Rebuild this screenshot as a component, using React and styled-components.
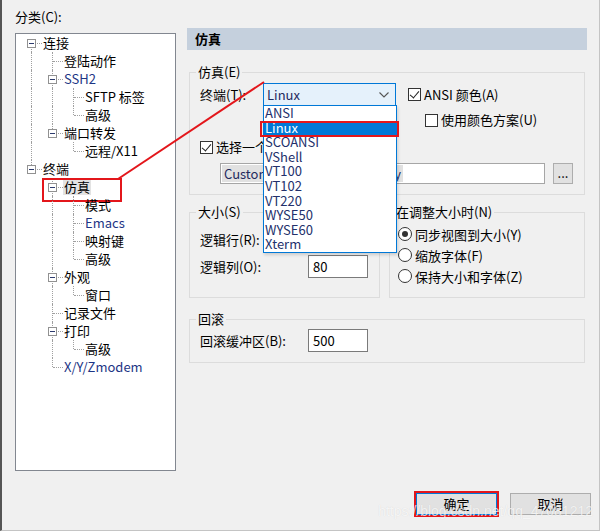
import React from "react";
import styled, { createGlobalStyle } from "styled-components";

const GlobalStyle = createGlobalStyle`
  html, body {
    margin: 0;
    padding: 0;
    background: #f0f0f0;
  }
  body {
    font-family: "Noto Sans CJK SC", "Noto Sans", sans-serif;
    font-size: 13px;
    color: #000;
  }
  * {
    box-sizing: border-box;
  }
`;

const tree = [
  {
    label: "连接",
    children: [
      { label: "登陆动作" },
      { label: "SSH2", latin: true, children: [{ label: "SFTP 标签" }, { label: "高级" }] },
      { label: "端口转发", children: [{ label: "远程/X11" }] },
    ],
  },
  {
    label: "终端",
    children: [
      {
        label: "仿真",
        selected: true,
        marked: true,
        children: [
          { label: "模式" },
          { label: "Emacs", latin: true },
          { label: "映射键" },
          { label: "高级" },
        ],
      },
      { label: "外观", children: [{ label: "窗口" }] },
      { label: "记录文件" },
      { label: "打印", children: [{ label: "高级" }] },
      { label: "X/Y/Zmodem", latin: true },
    ],
  },
];

// flatten the tree so every row knows which guide lines to draw
const flatten = (nodes, guides = [], out = []) => {
  nodes.forEach((node, i) => {
    const last = i === nodes.length - 1;
    out.push({ ...node, guides, first: guides.length === 0 && i === 0, last });
    if (node.children) flatten(node.children, [...guides, !last], out);
  });
  return out;
};

const terminals = ["ANSI", "Linux", "SCOANSI", "VShell", "VT100", "VT102", "VT220", "WYSE50", "WYSE60", "Xterm"];

const App = () => {
  const rows = flatten(tree);
  return (
    <Window>
      <GlobalStyle />
      <Body>
        <LeftCol>
          <Caption>分类(C):</Caption>
          <Tree>
            {rows.map((row, idx) => (
              <TreeRow key={idx} $marked={row.marked}>
                {row.guides.map((g, k) => (
                  <Guide key={k} $line={g} />
                ))}
                <Connector $first={row.first} $last={row.last}>
                  {row.children && <Expander />}
                </Connector>
                <NodeLabel $selected={row.selected} $latin={row.latin}>
                  {row.label}
                </NodeLabel>
              </TreeRow>
            ))}
          </Tree>
        </LeftCol>

        <Panel>
          <PanelHeader>仿真</PanelHeader>

          <Group $mt={14} $pt={3}>
            <Legend>仿真(E)</Legend>
            <FieldRow>
              <FieldLabel $w={63}>终端(T):</FieldLabel>
              <Combo>
                <ComboText>Linux</ComboText>
                <svg width="10" height="6" viewBox="0 0 10 6">
                  <polyline points="0.5,0.5 5,5 9.5,0.5" fill="none" stroke="#555" strokeWidth="1.1" />
                </svg>
                <DropList>
                  {terminals.map((t) => (
                    <DropItem key={t} $active={t === "Linux"}>
                      {t}
                    </DropItem>
                  ))}
                </DropList>
              </Combo>
              <CheckLabel $ml={12}>
                <CheckBox $checked />
                ANSI 颜色(A)
              </CheckLabel>
            </FieldRow>
            <FieldRow $mt={6} $pl={225}>
              <CheckLabel>
                <CheckBox />
                使用颜色方案(U)
              </CheckLabel>
            </FieldRow>
            <FieldRow $mt={11}>
              <CheckLabel>
                <CheckBox $checked />
                选择一个颜色方案(S)
              </CheckLabel>
            </FieldRow>
            <FieldRow $mt={8} $pl={20}>
              <SchemeField>
                <SchemeSelected>
                  <span>Custom</span>
                  <span>y</span>
                </SchemeSelected>
              </SchemeField>
              <MoreButton>...</MoreButton>
            </FieldRow>
          </Group>

          <GroupPair>
            <Group $pt={8} $grow={191}>
              <Legend>大小(S)</Legend>
              <FieldRow>
                <FieldLabel $w={108}>逻辑行(R):</FieldLabel>
                <TextInput>24</TextInput>
              </FieldRow>
              <FieldRow $mt={4}>
                <FieldLabel $w={108}>逻辑列(O):</FieldLabel>
                <TextInput>80</TextInput>
              </FieldRow>
            </Group>
            <Group $pt={4} $grow={196} $pl={8}>
              <Legend>在调整大小时(N)</Legend>
              <RadioRow>
                <Radio $checked />
                同步视图到大小(Y)
              </RadioRow>
              <RadioRow>
                <Radio />
                缩放字体(F)
              </RadioRow>
              <RadioRow>
                <Radio />
                保持大小和字体(Z)
              </RadioRow>
            </Group>
          </GroupPair>

          <Group $mt={13} $pt={2}>
            <Legend>回滚</Legend>
            <FieldRow>
              <FieldLabel $w={108}>回滚缓冲区(B):</FieldLabel>
              <TextInput>500</TextInput>
            </FieldRow>
          </Group>
        </Panel>
      </Body>

      <Footer>
        <DialogButton $default>确定</DialogButton>
        <DialogButton>取消</DialogButton>
      </Footer>

      <Annotation width="600" height="531" viewBox="0 0 600 531">
        <line x1="118" y1="179" x2="264" y2="82" stroke="#e3161b" strokeWidth="2" />
      </Annotation>
      <Watermark>https://blog.csdn.net/qq_47081212</Watermark>
    </Window>
  );
};

export default App;

const Window = styled.div`
  position: relative;
  width: 600px;
  height: 531px;
  background: #f0f0f0;
  border-left: 2px solid #555;
  border-right: 1px solid #c4c4c4;
  border-bottom: 1px solid #c4c4c4;
  padding-top: 9px;
  overflow: hidden;
`;

const Body = styled.div`
  display: flex;
  align-items: flex-start;
`;

const LeftCol = styled.div`
  margin-left: 13px;
  width: 161px;
  display: flex;
  flex-direction: column;
`;

const Caption = styled.div`
  line-height: 16px;
  height: 16px;
`;

const Tree = styled.div`
  margin-top: 8px;
  height: 438px;
  background: #fff;
  border: 1px solid #828790;
  padding: 0 0 0 5px;
`;

const TreeRow = styled.div`
  position: relative;
  display: flex;
  align-items: center;
  height: 18px;
  ${(p) =>
    p.$marked &&
    `
    &::after {
      content: "";
      position: absolute;
      left: 21px;
      top: 0;
      width: 76px;
      height: 20px;
      border: 2px solid #e3161b;
    }
  `}
`;

const Guide = styled.span`
  position: relative;
  width: 21px;
  height: 18px;
  flex: none;
  &::before {
    content: "";
    display: ${(p) => (p.$line ? "block" : "none")};
    position: absolute;
    left: 10px;
    top: 0;
    bottom: 0;
    border-left: 1px dotted #a0a0a0;
  }
`;

const Connector = styled.span`
  position: relative;
  width: 21px;
  height: 18px;
  flex: none;
  &::before {
    content: "";
    position: absolute;
    left: 10px;
    top: ${(p) => (p.$first ? "9px" : "0")};
    bottom: ${(p) => (p.$last ? "9px" : "0")};
    border-left: 1px dotted #a0a0a0;
  }
  &::after {
    content: "";
    position: absolute;
    left: 11px;
    right: 0;
    top: 9px;
    border-top: 1px dotted #a0a0a0;
  }
`;

const Expander = styled.span`
  position: absolute;
  left: 6px;
  top: 5px;
  width: 9px;
  height: 9px;
  background: #fff;
  border: 1px solid #919191;
  z-index: 1;
  &::after {
    content: "";
    position: absolute;
    left: 1px;
    right: 1px;
    top: 3px;
    height: 1px;
    background: #2d3b6e;
  }
`;

const NodeLabel = styled.span`
  padding: 0 1px;
  line-height: 16px;
  white-space: nowrap;
  color: ${(p) => (p.$latin ? "#1d3585" : "#000")};
  background: ${(p) => (p.$selected ? "#e3e3e3" : "transparent")};
`;

const Panel = styled.div`
  margin-left: 11px;
  margin-top: 19px;
  width: 400px;
  display: flex;
  flex-direction: column;
`;

const PanelHeader = styled.div`
  height: 22px;
  line-height: 22px;
  padding-left: 8px;
  background: #c5d0dd;
  font-weight: bold;
`;

const Group = styled.fieldset`
  margin: ${(p) => p.$mt || 0}px 2px 0;
  padding: ${(p) => p.$pt}px 10px 10px ${(p) => p.$pl ?? 10}px;
  border: 1px solid #dcdcdc;
  min-width: 0;
  ${(p) => p.$grow && `width: ${p.$grow}px; margin: 0;`}
`;

const Legend = styled.legend`
  padding: 0 2px;
  margin-left: -4px;
  line-height: 16px;
`;

const GroupPair = styled.div`
  display: flex;
  align-items: stretch;
  gap: 9px;
  margin: 9px 2px 0;
`;

const FieldRow = styled.div`
  display: flex;
  align-items: center;
  margin-top: ${(p) => p.$mt || 0}px;
  padding-left: ${(p) => p.$pl || 0}px;
`;

const FieldLabel = styled.span`
  width: ${(p) => p.$w}px;
  flex: none;
  line-height: 16px;
`;

const Combo = styled.div`
  position: relative;
  z-index: 3;
  width: 133px;
  height: 23px;
  background: #e5f1fb;
  border: 1px solid #0078d7;
  display: flex;
  align-items: center;
  justify-content: space-between;
  padding: 0 6px 0 3px;
`;

const ComboText = styled.span`
  color: #1f2a5e;
  line-height: 16px;
`;

const DropList = styled.div`
  position: absolute;
  left: -1px;
  top: 100%;
  width: 134px;
  background: #fff;
  border: 1px solid #0078d7;
  box-shadow: 1px 2px 3px rgba(0, 0, 0, 0.15);
`;

const DropItem = styled.div`
  position: relative;
  height: 14.6px;
  line-height: 14.6px;
  padding-left: 1px;
  color: ${(p) => (p.$active ? "#fff" : "#23306b")};
  background: ${(p) => (p.$active ? "#0078d7" : "transparent")};
  ${(p) =>
    p.$active &&
    `
    &::after {
      content: "";
      position: absolute;
      left: -4px;
      right: -3px;
      top: 0;
      bottom: -2px;
      border: 2px solid #e3161b;
    }
  `}
`;

const CheckLabel = styled.label`
  display: flex;
  align-items: center;
  height: 16px;
  line-height: 16px;
  margin-left: ${(p) => p.$ml || 0}px;
  white-space: nowrap;
`;

const CheckBox = styled.span`
  position: relative;
  flex: none;
  width: 13px;
  height: 13px;
  margin-right: 3px;
  background: #fff;
  border: 1px solid #333;
  ${(p) =>
    p.$checked &&
    `
    &::after {
      content: "";
      position: absolute;
      left: 3px;
      top: 0px;
      width: 4px;
      height: 8px;
      border-right: 1.3px solid #222;
      border-bottom: 1.3px solid #222;
      transform: rotate(40deg);
    }
  `}
`;

const SchemeField = styled.div`
  width: 325px;
  height: 21px;
  background: #fff;
  border: 1px solid #a6a6a6;
  padding: 1px;
`;

const SchemeSelected = styled.div`
  width: 181px;
  height: 17px;
  line-height: 17px;
  background: #e1e1e1;
  color: #1f2a5e;
  padding: 0 2px;
  display: flex;
  justify-content: space-between;
`;

const MoreButton = styled.div`
  width: 20px;
  height: 21px;
  margin-left: 8px;
  background: #e1e1e1;
  border: 1px solid #adadad;
  text-align: center;
  line-height: 17px;
`;

const TextInput = styled.div`
  width: 60px;
  height: 23px;
  line-height: 21px;
  padding: 0 4px;
  background: #fff;
  border: 1px solid #7a7a7a;
`;

const RadioRow = styled.label`
  display: flex;
  align-items: center;
  height: 20px;
  margin-bottom: 1px;
  white-space: nowrap;
`;

const Radio = styled.span`
  position: relative;
  flex: none;
  width: 14px;
  height: 14px;
  margin-right: 3px;
  border-radius: 50%;
  border: 1px solid #333;
  background: #fff;
  ${(p) =>
    p.$checked &&
    `
    &::after {
      content: "";
      position: absolute;
      inset: 3px;
      border-radius: 50%;
      background: #333;
    }
  `}
`;

const Footer = styled.div`
  display: flex;
  justify-content: flex-end;
  gap: 13px;
  padding-right: 8px;
  margin-top: 22px;
`;

const DialogButton = styled.div`
  width: 81px;
  height: 22px;
  line-height: 20px;
  text-align: center;
  background: #e1e1e1;
  border: 1px solid ${(p) => (p.$default ? "#0078d7" : "#adadad")};
  ${(p) => p.$default && `outline: 2px solid #e3161b;`}
`;

const Annotation = styled.svg`
  position: absolute;
  left: -2px;
  top: 0;
  pointer-events: none;
  z-index: 5;
`;

const Watermark = styled.div`
  position: absolute;
  right: 6px;
  bottom: 11px;
  z-index: 6;
  font-family: "Liberation Sans", sans-serif;
  font-size: 14px;
  color: rgba(255, 255, 255, 0.75);
  text-shadow: 0 0 1px rgba(0, 0, 0, 0.12);
  pointer-events: none;
`;
